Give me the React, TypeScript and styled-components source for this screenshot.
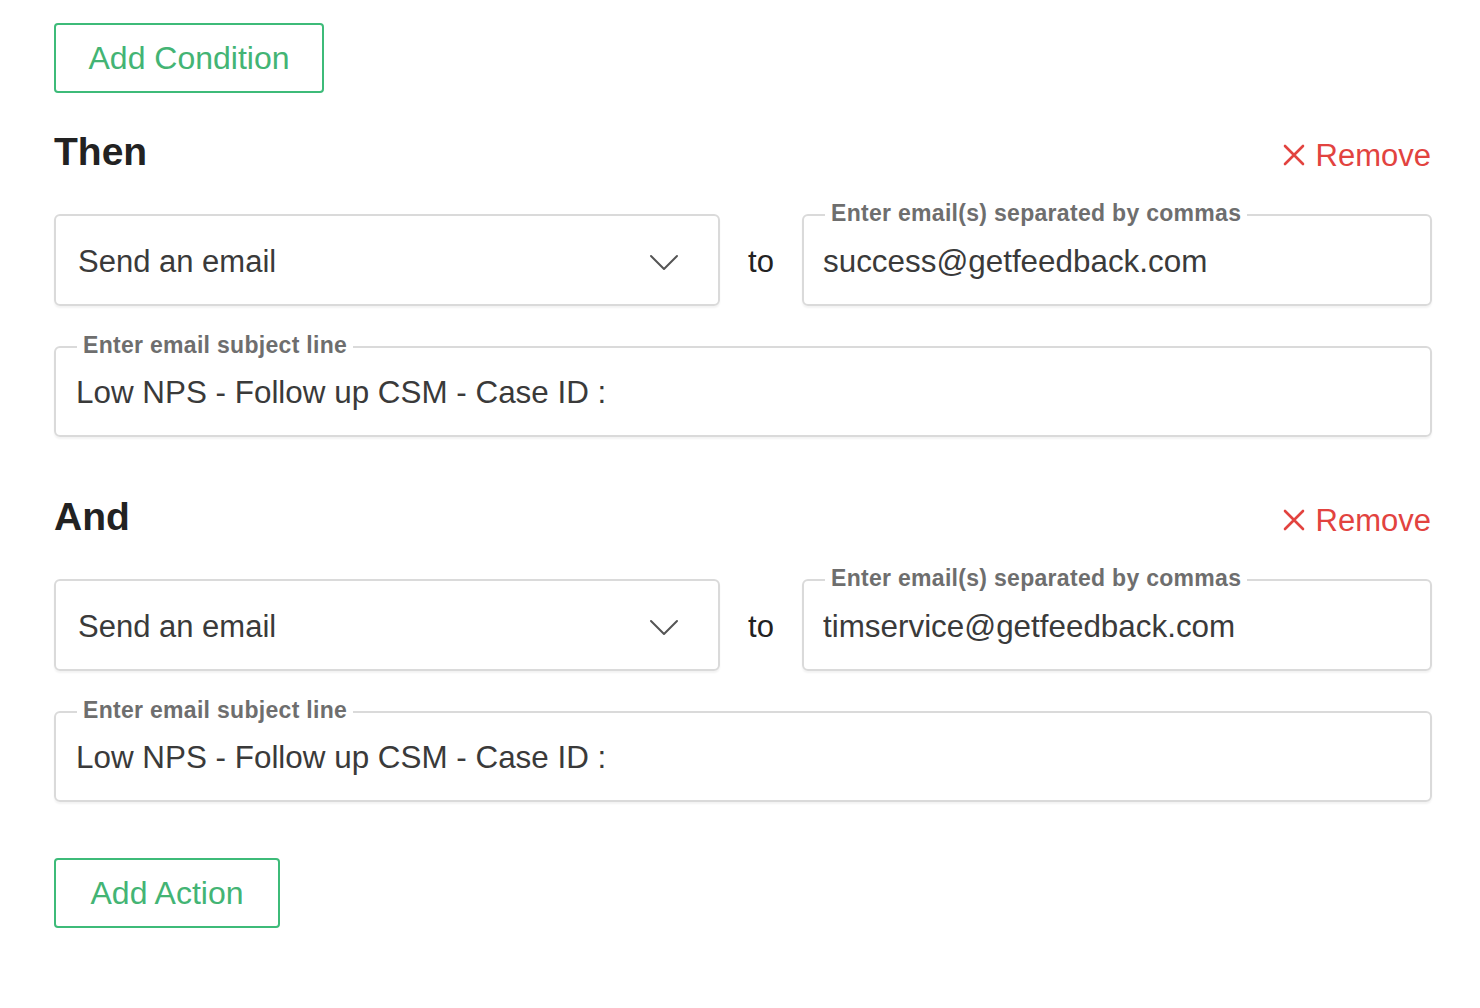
import React from 'react';
import styled, { createGlobalStyle } from 'styled-components';

const GlobalStyle = createGlobalStyle`
    html, body {
        margin: 0;
        padding: 0;
        background: #ffffff;
    }
    body {
        font-family: "Liberation Sans", Arial, Helvetica, sans-serif;
        color: #333333;
    }
`

type Action = {
    title: string;
    recipient: string;
    subject: string;
};

const actions: Action[] = [
    { title: 'Then', recipient: 'success@getfeedback.com', subject: 'Low NPS - Follow up CSM - Case ID :' },
    { title: 'And', recipient: 'timservice@getfeedback.com', subject: 'Low NPS - Follow up CSM - Case ID :' },
];

const Chevron = () => (
    <svg width="32" height="20" viewBox="0 0 32 20" fill="none">
        <path d="M3 4 L16 17 L29 4" stroke="#555555" strokeWidth="2" strokeLinecap="round" strokeLinejoin="round" />
    </svg>
);

const Cross = () => (
    <svg width="22" height="22" viewBox="0 0 22 22" fill="none">
        <path d="M2 2 L20 20 M20 2 L2 20" stroke="#e2433f" strokeWidth="2.6" strokeLinecap="round" />
    </svg>
);

export default function App() {
    return (
        <Page>
            <GlobalStyle />
            <OutlineButton>Add Condition</OutlineButton>
            <Sections>
                {actions.map((a) => (
                    <Section key={a.title}>
                        <Header>
                            <Title>{a.title}</Title>
                            <RemoveLink>
                                <Cross />
                                Remove
                            </RemoveLink>
                        </Header>
                        <ActionRow>
                            <SelectBox>
                                <span>Send an email</span>
                                <Chevron />
                            </SelectBox>
                            <To>to</To>
                            <Field>
                                <FieldLabel>Enter email(s) separated by commas</FieldLabel>
                                <FieldInput defaultValue={a.recipient} />
                            </Field>
                        </ActionRow>
                        <Field $subject>
                            <FieldLabel>Enter email subject line</FieldLabel>
                            <FieldInput defaultValue={a.subject} />
                        </Field>
                    </Section>
                ))}
            </Sections>
            <OutlineButton $small>Add Action</OutlineButton>
        </Page>
    );
}

const Page = styled.div`
    display: flex;
    flex-direction: column;
    align-items: flex-start;
    padding: 23px 48px 40px 54px;
    width: 1378px;
`

const OutlineButton = styled.button<{ $small?: boolean }>`
    box-sizing: border-box;
    height: 70px;
    width: ${(p) => (p.$small ? '226px' : '270px')};
    margin-top: ${(p) => (p.$small ? '56px' : '0')};
    background: #ffffff;
    border: 2px solid #3dbb79;
    border-radius: 4px;
    color: #43b474;
    font-family: "Liberation Sans", Arial, sans-serif;
    font-size: 32px;
    padding: 0;
    cursor: pointer;
`

const Sections = styled.div`
    display: flex;
    flex-direction: column;
    gap: 57px;
    margin-top: 36px;
    width: 100%;
`

const Section = styled.section`
    display: flex;
    flex-direction: column;
    width: 100%;
`

const Header = styled.div`
    display: flex;
    justify-content: space-between;
    align-items: baseline;
    margin-bottom: 40px;
`

const Title = styled.h2`
    margin: 0;
    font-size: 39px;
    line-height: 45px;
    font-weight: 700;
    color: #222222;
`

const RemoveLink = styled.a`
    display: flex;
    align-items: center;
    gap: 11px;
    color: #e2433f;
    font-size: 31px;
    line-height: 34px;
    position: relative;
    top: 2px;
    right: 1px;
    cursor: pointer;
    svg {
        position: relative;
        top: -1px;
    }
`

const ActionRow = styled.div`
    display: grid;
    grid-template-columns: 666px 82px 1fr;
    align-items: center;
    margin-bottom: 40px;
`

const SelectBox = styled.div`
    box-sizing: border-box;
    height: 92px;
    display: flex;
    align-items: center;
    justify-content: space-between;
    padding: 3px 38px 0 22px;
    border: 2px solid #dadada;
    border-radius: 6px;
    box-shadow: 0 2px 2px rgba(0, 0, 0, 0.05);
    font-size: 31px;
    color: #3a3a3a;
`

const To = styled.span`
    text-align: center;
    padding-top: 3px;
    font-size: 31px;
    color: #222222;
`

const Field = styled.div<{ $subject?: boolean }>`
    position: relative;
    box-sizing: border-box;
    height: ${(p) => (p.$subject ? '91px' : '92px')};
    display: flex;
    align-items: center;
    padding: 3px ${(p) => (p.$subject ? '20px' : '19px')} 0;
    border: 2px solid #dadada;
    border-radius: 6px;
    box-shadow: 0 2px 2px rgba(0, 0, 0, 0.05);
`

const FieldLabel = styled.label`
    position: absolute;
    top: -17px;
    left: 21px;
    padding: 0 6px;
    background: #ffffff;
    font-size: 23px;
    letter-spacing: 0.3px;
    line-height: 28px;
    font-weight: 700;
    color: #6e6e6e;
`

const FieldInput = styled.input`
    width: 100%;
    border: none;
    outline: none;
    padding: 0;
    background: transparent;
    font-family: "Liberation Sans", Arial, sans-serif;
    font-size: 31.4px;
    color: #3a3a3a;
`
